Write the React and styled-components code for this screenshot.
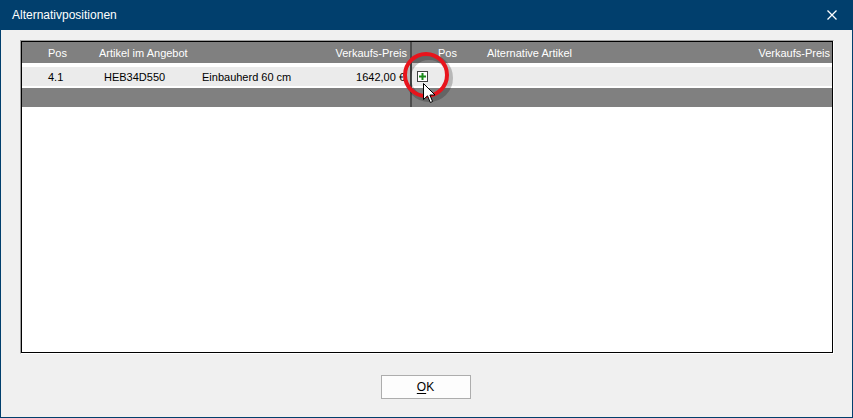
import React from 'react';
import styled, {createGlobalStyle} from 'styled-components';

const GlobalStyle = createGlobalStyle`
    html, body {
        margin: 0;
        padding: 0;
        background: #f0f0f0;
    }
    * {
        box-sizing: border-box;
    }
`;

const Window = styled('div')`
    width: 853px;
    height: 418px;
    border: 1px solid #013f6d;
    border-top: none;
    background: #f0f0f0;
    display: flex;
    flex-direction: column;
    font-family: "Liberation Sans", Arial, sans-serif;
    position: relative;
    overflow: hidden;
`;

const TitleBar = styled('div')`
    height: 30px;
    background: #013f6d;
    color: #fff;
    display: flex;
    align-items: center;
    justify-content: space-between;
    padding: 0 15px 0 11px;
    font-size: 12px;
    
    & span{
        padding-bottom: 1px;
    }
`;

const Content = styled('div')`
    flex: 1;
    display: flex;
    flex-direction: column;
    align-items: center;
    padding: 10px 18px 18px 19px;
`;

const Sunken = styled('div')`
    width: 100%;
    height: 314px;
    border: 1px solid;
    border-color: #a0a0a0 #fff #fff #a0a0a0;
`;

const Grid = styled('div')`
    height: 100%;
    border: 1px solid #000;
    background: #fff;
    font-size: 11px;
    display: flex;
    align-items: flex-start;
`;

const Pane = styled('div')`
    flex: ${p => p.$flex};
    display: flex;
    flex-direction: column;
`;

const Splitter = styled('div')`
    width: 2px;
    height: 65px;
    background: #4d4d4d;
`;

const HeadRow = styled('div')`
    height: 21px;
    background: #808080;
    color: #fff;
    display: flex;
    align-items: center;
    margin-bottom: 4px;
`;

const DataRow = styled('div')`
    height: 19px;
    background: #ebebeb;
    color: #000;
    display: flex;
    align-items: center;
    margin-bottom: 2px;
`;

const Band = styled('div')`
    height: 19px;
    background: #808080;
`;

const Cell = styled('div')`
    width: ${p => p.$w ? p.$w + 'px' : 'auto'};
    flex: ${p => p.$w ? 'none' : 1};
    padding-left: ${p => p.$pl || 0}px;
    padding-right: ${p => p.$pr || 0}px;
    white-space: nowrap;
    display: flex;
    align-items: center;
    justify-content: ${p => p.$right ? 'flex-end' : 'flex-start'};
`;

const PlusBox = styled('span')`
    width: 11px;
    height: 11px;
    border: 1px solid #404040;
    background: #fff;
    display: inline-flex;
    align-items: center;
    justify-content: center;
`;

const Highlight = styled('svg')`
    position: absolute;
    left: 398px;
    top: 49px;
    pointer-events: none;
`;

const Cursor = styled('svg')`
    position: absolute;
    left: 422px;
    top: 83px;
`;

const Footer = styled('div')`
    margin-top: 21px;
    margin-right: 3px;
`;

const OkButton = styled('button')`
    width: 90px;
    height: 24px;
    border: 1px solid #adadad;
    background: #fdfdfd;
    font-family: "Liberation Sans", Arial, sans-serif;
    font-size: 12px;
    color: #000;
    padding: 0;
    
    & u{
        text-decoration-thickness: 1px;
        text-underline-offset: 2px;
    }
`;

const CloseIcon = () => (
    <svg width="10" height="10" viewBox="0 0 10 10">
        <path d="M0.5 0.5 L9.5 9.5 M9.5 0.5 L0.5 9.5" stroke="#fff" strokeWidth="1.3"/>
    </svg>
);

const PlusIcon = () => (
    <svg width="7" height="7" viewBox="0 0 7 7">
        <path d="M3.5 0 V7 M0 3.5 H7" stroke="#1a8a1a" strokeWidth="2"/>
    </svg>
);

const App = () => {
    return (
        <>
            <GlobalStyle/>
            <Window>
                <TitleBar>
                    <span>Alternativpositionen</span>
                    <CloseIcon/>
                </TitleBar>
                <Content>
                    <Sunken>
                        <Grid>
                            <Pane $flex="0 0 388px">
                                <HeadRow>
                                    <Cell $w={77} $pl={26}>Pos</Cell>
                                    <Cell>Artikel im Angebot</Cell>
                                    <Cell $right $pr={3}>Verkaufs-Preis</Cell>
                                </HeadRow>
                                <DataRow>
                                    <Cell $w={82} $pl={26}>4.1</Cell>
                                    <Cell $w={98}>HEB34D550</Cell>
                                    <Cell>Einbauherd 60 cm</Cell>
                                    <Cell $right $pr={5}>1642,00 €</Cell>
                                </DataRow>
                                <Band/>
                            </Pane>
                            <Splitter/>
                            <Pane $flex="1">
                                <HeadRow>
                                    <Cell $w={75} $pl={26}>Pos</Cell>
                                    <Cell>Alternative Artikel</Cell>
                                    <Cell $right $pr={2}>Verkaufs-Preis</Cell>
                                </HeadRow>
                                <DataRow>
                                    <Cell $w={40} $pl={5}>
                                        <PlusBox><PlusIcon/></PlusBox>
                                    </Cell>
                                </DataRow>
                                <Band/>
                            </Pane>
                        </Grid>
                    </Sunken>
                    <Footer>
                        <OkButton><u>O</u>K</OkButton>
                    </Footer>
                </Content>

                <Highlight width="58" height="58" viewBox="0 0 58 58">
                    <circle cx="30" cy="29" r="21" fill="none" stroke="rgba(0,0,0,0.22)" strokeWidth="6"/>
                    <circle cx="27" cy="26" r="21" fill="none" stroke="#e8141c" strokeWidth="4"/>
                </Highlight>
                <Cursor width="14" height="21" viewBox="0 0 14 21">
                    <path d="M0.5 0.5 V16.5 L4.5 12.8 L7.3 19.5 L9.6 18.5 L6.9 12 H12 Z"
                          fill="#fff" stroke="#000" strokeWidth="1" strokeLinejoin="round"/>
                </Cursor>
            </Window>
        </>
    );
};

export default App;
